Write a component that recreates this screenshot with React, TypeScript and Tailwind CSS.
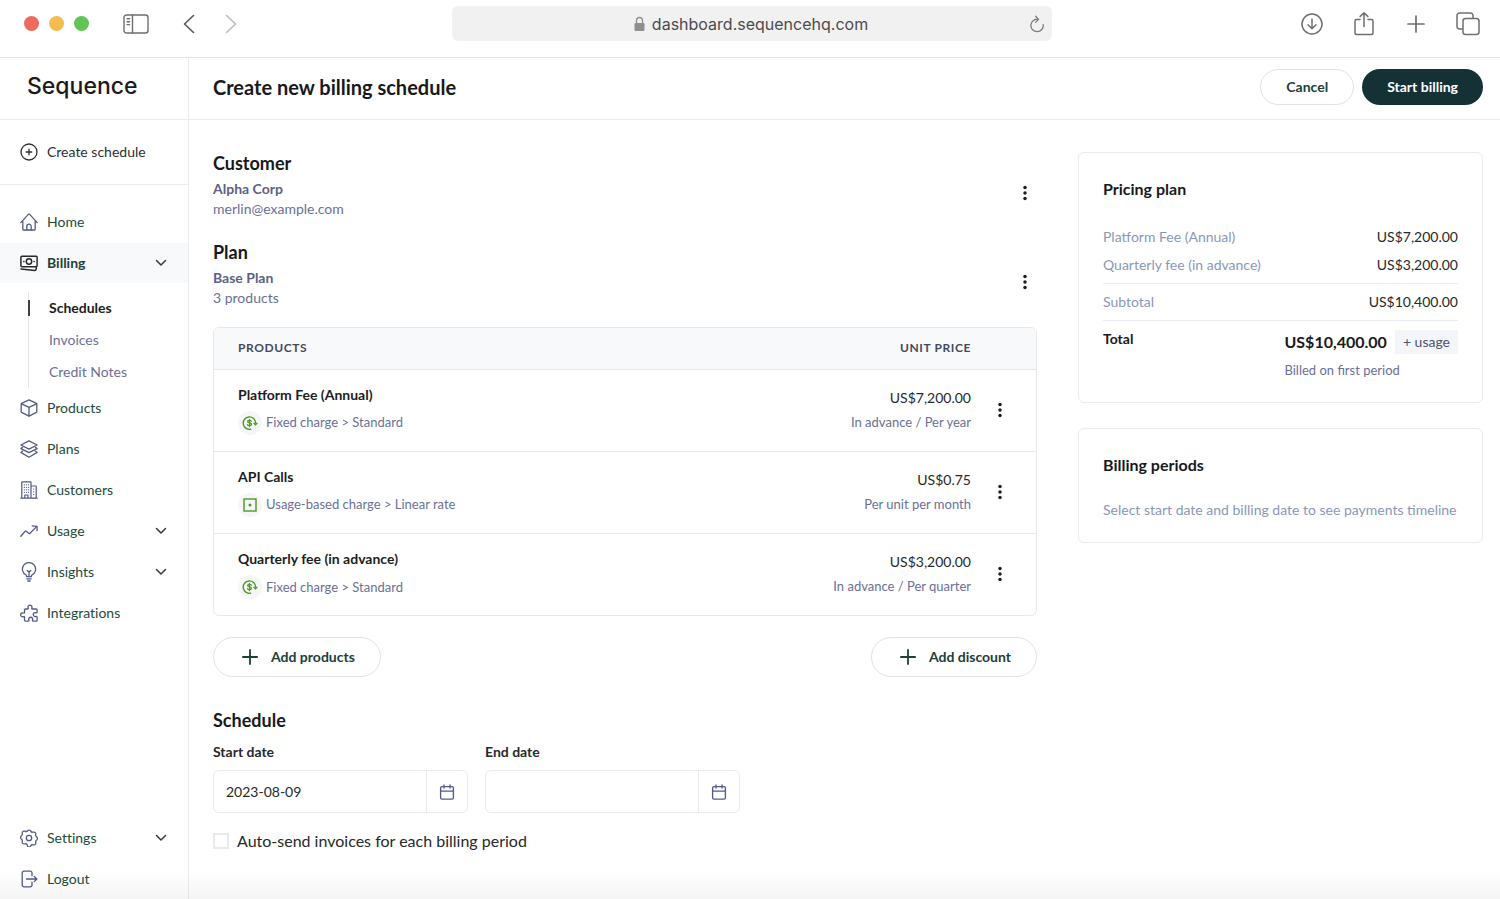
import type { ReactNode } from "react";
import { useState } from "react";

type IconProps = { className?: string };

function Svg({ className = "size-[18px]", width = 1.3, children }: IconProps & { width?: number; children: ReactNode }) {
  return (
    <svg
      className={className}
      viewBox="0 0 18 18"
      fill="none"
      stroke="currentColor"
      strokeWidth={width}
      strokeLinecap="round"
      strokeLinejoin="round"
      aria-hidden="true"
    >
      {children}
    </svg>
  );
}

const HomeIcon = () => (
  <Svg>
    <path d="M.8 9.6 8.3 1.4a1 1 0 0 1 1.4 0l7.5 8.2M2.8 8.2v8a.8.8 0 0 0 .8.8h10.8a.8.8 0 0 0 .8-.8v-8" />
    <path d="M6.8 17v-3.6a2.2 2.2 0 0 1 4.4 0V17" />
  </Svg>
);

const BillingIcon = () => (
  <Svg width={1.5}>
    <rect x=".9" y="2.2" width="16.2" height="10.6" rx="1" />
    <circle cx="9" cy="7.5" r="2.7" />
    <path d="M3.8 7.5h.2M14 7.5h.2M1 15l13.6 1.4a1.4 1.4 0 0 0 1.5-1.2l.2-1.6" />
  </Svg>
);

const BoxIcon = () => (
  <Svg>
    <path d="M9 .9 16.4 4.4a.8.8 0 0 1 .4.7v7.6a.8.8 0 0 1-.4.7L9 17.1l-7.4-3.7a.8.8 0 0 1-.4-.7V5.1a.8.8 0 0 1 .4-.7L9 .9Z" />
    <path d="M1.6 4.8 9 8.4l7.4-3.6M9 8.4v8.5" />
  </Svg>
);

const LayersIcon = () => (
  <Svg>
    <path d="M9 .8 17.1 5 9 9.2.9 5 9 .8Z" />
    <path d="M2.6 7.4.9 8.6 9 12.7l8.1-4.1-1.7-1.2M2.6 11.1.9 12.4 9 17.2l8.1-4.8-1.7-1.3" />
  </Svg>
);

const BuildingIcon = () => (
  <Svg width={1.2}>
    <path d="M.8 17.2h16.4M1.8 17V1.4a.6.6 0 0 1 .6-.6h8a.6.6 0 0 1 .6.6V17M11 5h4.6a.6.6 0 0 1 .6.6V17M4.8 17v-3H8v3" />
    <path d="M4.3 3.8h.1M6.4 3.8h.1M8.5 3.8h.1M4.3 6.3h.1M6.4 6.3h.1M8.5 6.3h.1M4.3 8.8h.1M6.4 8.8h.1M8.5 8.8h.1M4.3 11.3h.1M6.4 11.3h.1M8.5 11.3h.1M13.6 8h.1M13.6 10.8h.1M13.6 13.6h.1" />
  </Svg>
);

const TrendIcon = () => (
  <Svg>
    <path d="m.8 14.2 4.4-5a.8.8 0 0 1 1.2 0l2.4 2.2a.8.8 0 0 0 1.2-.1l6.8-6.9" />
    <path d="m12.2 3.9 4.8.4.1 4.2" />
  </Svg>
);

const BulbIcon = () => (
  <svg className="h-5 w-[18px]" viewBox="0 0 18 20" fill="none" stroke="currentColor" strokeWidth="1.3" strokeLinecap="round" strokeLinejoin="round" aria-hidden="true">
    <path d="M6.5 14.6v-1.3a6.6 6.6 0 1 1 5 0v1.3ZM6.8 16.8h4.4M7.8 19h2.4M9 14.4V9.8M7.2 8.6 9 9.9l1.8-1.3" />
  </svg>
);

const PuzzleIcon = () => (
  <Svg>
    <path d="M5.4 5h2.2c.5 0 .8-.5.6-1a2 2 0 1 1 3.6 0c-.2.5.1 1 .6 1h3.8a.9.9 0 0 1 .9.9v2.3c0 .5-.5.8-1 .6a2 2 0 1 0 0 3.6c.5-.2 1 .1 1 .6v3.2a.9.9 0 0 1-.9.9h-3.1c-.5 0-.8-.5-.6-1a2 2 0 1 0-3.6 0c.2.5-.1 1-.6 1H5.4a.9.9 0 0 1-.9-.9v-3c0-.5-.5-.8-1-.6a2 2 0 1 1 0-3.6c.5.2 1-.1 1-.6V5.9a.9.9 0 0 1 .9-.9Z" />
  </Svg>
);

const GearIcon = () => (
  <Svg>
    <circle cx="9" cy="9" r="2.7" />
    <path d="m7.4 2 .2-.3a1.8 1.8 0 0 1 2.8 0l.6.8a1.8 1.8 0 0 0 1.8.7l1-.1a1.8 1.8 0 0 1 2 2l-.1 1a1.8 1.8 0 0 0 .7 1.6l.4.4a1.8 1.8 0 0 1 0 2.8l-.4.3a1.8 1.8 0 0 0-.7 1.7l.1 1a1.8 1.8 0 0 1-2 2l-1-.1a1.8 1.8 0 0 0-1.8.7l-.6.8a1.8 1.8 0 0 1-2.8 0L7 15.5a1.8 1.8 0 0 0-1.8-.7l-1 .1a1.8 1.8 0 0 1-2-2l.1-1a1.8 1.8 0 0 0-.7-1.7l-.4-.3a1.8 1.8 0 0 1 0-2.8l.4-.4a1.8 1.8 0 0 0 .7-1.6l-.1-1a1.8 1.8 0 0 1 2-2l1 .1A1.8 1.8 0 0 0 7 2.5Z" />
  </Svg>
);

const LogoutIcon = () => (
  <Svg>
    <path d="M12 5.8V3a1.8 1.8 0 0 0-1.8-1.8H4A1.8 1.8 0 0 0 2.2 3v12A1.8 1.8 0 0 0 4 16.8h6.2A1.8 1.8 0 0 0 12 15v-2.8M6.5 9h10.3M14.2 6.4 16.9 9l-2.7 2.6" />
  </Svg>
);

const PlusCircleIcon = () => (
  <Svg>
    <circle cx="9" cy="9" r="8" />
    <path d="M9 6.2v5.6M6.2 9h5.6" />
  </Svg>
);

const CalendarIcon = () => (
  <Svg className="size-4" width={1.5}>
    <rect x="1.8" y="3" width="14.4" height="14" rx="1.6" />
    <path d="M1.8 8h14.4M5.6 1v3.6M12.4 1v3.6" />
  </Svg>
);

const Chevron = () => (
  <svg className="h-2 w-3 text-[#33373f]" viewBox="0 0 12 8" fill="none" stroke="currentColor" strokeWidth="1.5" strokeLinecap="round" strokeLinejoin="round" aria-hidden="true">
    <path d="M1.5 1.5 6 6l4.5-4.5" />
  </svg>
);

const PlusIcon = () => (
  <svg className="size-4" viewBox="0 0 16 16" stroke="currentColor" strokeWidth="1.8" strokeLinecap="round" aria-hidden="true">
    <path d="M8 .9v14.2M.9 8h14.2" />
  </svg>
);

function FixedChargeIcon() {
  return (
    <svg className="h-[14px] w-4" viewBox="0 0 16 14" fill="none" stroke="#4f9a1c" strokeWidth="1.4" strokeLinecap="round" strokeLinejoin="round" aria-hidden="true">
      <path d="M8.6 13.2A6.2 6.2 0 1 1 13.6 7" />
      <path d="M11.8 7.2h3.6l-1.8 2Z" fill="#4f9a1c" strokeWidth=".8" />
      <path d="M9.4 5.2C9 4.5 8.3 4.3 7.5 4.3c-1 0-1.9.4-1.9 1.3 0 1.9 3.9.8 3.9 2.7 0 .9-.9 1.4-2 1.4-.9 0-1.7-.3-2-1M7.5 3.3v7.4" strokeWidth="1.3" />
    </svg>
  );
}

function UsageChargeIcon() {
  return (
    <svg className="size-[14px]" viewBox="0 0 14 14" fill="none" aria-hidden="true">
      <rect x="1" y="1" width="12" height="12" stroke="#4f9a1c" strokeWidth="1.4" />
      <circle cx="7" cy="7" r="1.5" fill="#4f9a1c" />
    </svg>
  );
}

function MoreButton({ label }: { label: string }) {
  return (
    <button type="button" aria-label={label} className="flex h-6 w-6 items-center justify-center text-[#1b1d1f]">
      <svg className="h-4 w-1" viewBox="0 0 4 16" fill="currentColor" aria-hidden="true">
        <circle cx="2" cy="2.6" r="1.75" />
        <circle cx="2" cy="8" r="1.75" />
        <circle cx="2" cy="13.4" r="1.75" />
      </svg>
    </button>
  );
}

function BrowserBar() {
  return (
    <header className="flex items-start gap-4 border-b border-[#e3e3e4] pt-[6px] pb-4 text-[#6f6f70]">
      <div className="flex h-[35px] flex-1 items-center pl-6">
        <div className="flex gap-[10px]">
          <span className="size-[15px] rounded-full bg-[#ee6a5f]" />
          <span className="size-[15px] rounded-full bg-[#f5bd4f]" />
          <span className="size-[15px] rounded-full bg-[#61c454]" />
        </div>
        <button type="button" aria-label="Toggle sidebar" className="ml-[34px]">
          <svg className="h-5 w-[26px]" viewBox="0 0 26 20" fill="none" stroke="currentColor" strokeWidth="1.4" strokeLinecap="round">
            <rect x="1" y="1" width="24" height="18" rx="2.5" />
            <path d="M9.5 1v18M4 4.8h2.6M4 7.7h2.6M4 10.6h2.6" />
          </svg>
        </button>
        <button type="button" aria-label="Back" className="ml-[34px]">
          <svg className="h-5 w-3" viewBox="0 0 12 20" fill="none" stroke="#555557" strokeWidth="1.6" strokeLinecap="round" strokeLinejoin="round">
            <path d="M10.5 1.5 1.5 10l9 8.5" />
          </svg>
        </button>
        <button type="button" aria-label="Forward" className="ml-[30px]">
          <svg className="h-5 w-3" viewBox="0 0 12 20" fill="none" stroke="#bcbcbd" strokeWidth="1.6" strokeLinecap="round" strokeLinejoin="round">
            <path d="m1.5 1.5 9 8.5-9 8.5" />
          </svg>
        </button>
      </div>
      <div className="flex h-[35px] w-2/5 items-center rounded-md bg-[#f1f1f1] pr-2 pl-5">
        <div className="flex flex-1 items-center justify-center gap-[7px]">
          <svg className="h-4 w-[11px]" viewBox="0 0 11 16" fill="none" aria-hidden="true">
            <path d="M2.5 8V4.5a3 3 0 0 1 6 0V8" stroke="#8f8f90" strokeWidth="1.3" />
            <rect x=".5" y="7" width="10" height="8" rx="1.3" fill="#8f8f90" />
          </svg>
          <span className="font-[Inter,sans-serif] text-base leading-5 text-[#4b4b4c]">dashboard.sequencehq.com</span>
        </div>
        <button type="button" aria-label="Reload">
          <svg className="h-[18px] w-[14px]" viewBox="0 0 14 18" fill="none" stroke="#7d7d7e" strokeWidth="1.3" strokeLinecap="round" strokeLinejoin="round">
            <path d="M8.3 4.4a6.2 6.2 0 1 0 4.9 5.2M5.6 1.2l3 3.2-3 3" />
          </svg>
        </button>
      </div>
      <div className="flex h-[35px] flex-1 items-center justify-end gap-7 pr-5">
        <button type="button" aria-label="Downloads">
          <svg className="size-6" viewBox="0 0 24 24" fill="none" stroke="currentColor" strokeWidth="1.5" strokeLinecap="round" strokeLinejoin="round">
            <circle cx="12" cy="12" r="10" />
            <path d="M12 7v9.5M8 12.8l4 4 4-4" />
          </svg>
        </button>
        <button type="button" aria-label="Share">
          <svg className="size-6" viewBox="0 0 24 24" fill="none" stroke="currentColor" strokeWidth="1.5" strokeLinecap="round" strokeLinejoin="round">
            <path d="M8 7.5H4.5A1.5 1.5 0 0 0 3 9v12a1.5 1.5 0 0 0 1.5 1.5h15A1.5 1.5 0 0 0 21 21V9a1.5 1.5 0 0 0-1.5-1.5H16M12 14.5V.9M8.2 4.4 12 .8l3.8 3.6" />
          </svg>
        </button>
        <button type="button" aria-label="New tab">
          <svg className="size-6" viewBox="0 0 24 24" fill="none" stroke="currentColor" strokeWidth="1.7" strokeLinecap="round">
            <path d="M12 4v16M4 12h16" />
          </svg>
        </button>
        <button type="button" aria-label="Show tabs">
          <svg className="size-6" viewBox="0 0 24 24" fill="none" stroke="currentColor" strokeWidth="1.5" strokeLinejoin="round">
            <rect x="7" y="6.5" width="16" height="16" rx="2.5" />
            <path d="M7 17H3.5A2.5 2.5 0 0 1 1 14.5v-11A2.5 2.5 0 0 1 3.5 1h11A2.5 2.5 0 0 1 17 3.5v3" />
          </svg>
        </button>
      </div>
    </header>
  );
}

function NavItem({ icon, label, expandable, active }: { icon: ReactNode; label: string; expandable?: boolean; active?: boolean }) {
  return (
    <a
      href="#"
      className={
        active
          ? "flex h-10 items-center gap-[9px] bg-[#f8f9fb] pr-[21px] pl-5 text-sm font-bold text-[#1d4038]"
          : "flex h-10 items-center gap-[9px] pr-[21px] pl-5 text-sm text-[#1d4a3c]"
      }
    >
      <span className={active ? "text-[#26282c]" : "text-[#545a86]"}>{icon}</span>
      <span className="flex-1">{label}</span>
      {expandable && <Chevron />}
    </a>
  );
}

function Sidebar() {
  return (
    <aside className="flex w-[189px] shrink-0 flex-col border-r border-[#e9ebf0]">
      <div className="flex h-[62px] items-center border-b border-[#e9ebf0] px-[27px] pb-1">
        <span className="font-[Inter,sans-serif] text-[23px] font-medium text-[#1a1a1a]">Sequence</span>
      </div>
      <div className="border-b border-[#e9ebf0]">
        <a href="#" className="flex h-16 items-center gap-[9px] px-5 text-sm text-[#2c2f33]">
          <PlusCircleIcon />
          Create schedule
        </a>
      </div>
      <nav className="mt-[17px] flex flex-1 flex-col gap-px [font-variant-ligatures:none]">
        <NavItem icon={<HomeIcon />} label="Home" />
        <NavItem icon={<BillingIcon />} label="Billing" expandable active />
        <div className="mt-2 -mb-px ml-7 flex flex-col border-l border-[#e4e6ee] text-sm text-[#6b7097]">
          <a href="#" className="flex h-8 items-center font-bold text-[#1b1d1f]">
            <span className="-ml-px h-4 w-0.5 bg-[#3c3e42]" />
            <span className="pl-[19px]">Schedules</span>
          </a>
          <a href="#" className="flex h-8 items-center pl-5">Invoices</a>
          <a href="#" className="flex h-8 items-center pl-5">Credit Notes</a>
        </div>
        <NavItem icon={<BoxIcon />} label="Products" />
        <NavItem icon={<LayersIcon />} label="Plans" />
        <NavItem icon={<BuildingIcon />} label="Customers" />
        <NavItem icon={<TrendIcon />} label="Usage" expandable />
        <NavItem icon={<BulbIcon />} label="Insights" expandable />
        <NavItem icon={<PuzzleIcon />} label="Integrations" />
        <div className="mt-auto flex flex-col gap-px">
          <NavItem icon={<GearIcon />} label="Settings" expandable />
          <NavItem icon={<LogoutIcon />} label="Logout" />
        </div>
      </nav>
    </aside>
  );
}

function Section({ title, name, detail }: { title: string; name: string; detail: string }) {
  return (
    <section className="flex items-start justify-between">
      <div>
        <h2 className="mb-1 text-lg leading-6 font-bold text-[#17191c]">{title}</h2>
        <p className="text-sm leading-5 font-bold text-[#5b6189]">{name}</p>
        <p className="text-sm leading-5 text-[#6b7097]">{detail}</p>
      </div>
      <div className="pt-[30px]">
        <MoreButton label={`${title} options`} />
      </div>
    </section>
  );
}

const products = [
  { name: "Platform Fee (Annual)", type: "Fixed charge > Standard", icon: <FixedChargeIcon />, price: "US$7,200.00", terms: "In advance / Per year" },
  { name: "API Calls", type: "Usage-based charge > Linear rate", icon: <UsageChargeIcon />, price: "US$0.75", terms: "Per unit per month" },
  { name: "Quarterly fee (in advance)", type: "Fixed charge > Standard", icon: <FixedChargeIcon />, price: "US$3,200.00", terms: "In advance / Per quarter" },
];

function ProductsTable() {
  return (
    <div className="overflow-hidden rounded-md border border-[#e6e8f0]">
      <table className="w-full">
        <thead>
          <tr className="h-[41px] border-b border-[#e6e8f0] bg-[#f8f9fb] text-xs tracking-wider text-[#444960]">
            <th className="pl-6 text-left font-bold">PRODUCTS</th>
            <th className="text-right font-bold">UNIT PRICE</th>
            <th className="w-[65px]" />
          </tr>
        </thead>
        <tbody>
          {products.map((product) => (
            <tr key={product.name} className="h-[82px] border-b border-[#e6e8f0] last:border-b-0">
              <td className="pl-6">
                <p className="text-sm leading-5 font-bold text-[#1b1d1f]">{product.name}</p>
                <div className="mt-[6px] flex items-center gap-1">
                  <span className="flex size-6 items-center justify-center rounded-full bg-[#f5f6f9]">{product.icon}</span>
                  <span className="text-[13px] text-[#6b7097]">{product.type}</span>
                </div>
              </td>
              <td className="text-right">
                <p className="text-sm leading-6 text-[#26282c]">{product.price}</p>
                <p className="text-[13px] leading-6 text-[#6b7097]">{product.terms}</p>
              </td>
              <td className="pl-[17px]">
                <MoreButton label={`${product.name} options`} />
              </td>
            </tr>
          ))}
        </tbody>
      </table>
    </div>
  );
}

function DateField({ id, label, value, onChange }: { id: string; label: string; value: string; onChange: (value: string) => void }) {
  return (
    <div>
      <label htmlFor={id} className="block text-sm leading-5 font-bold text-[#26282c]">{label}</label>
      <div className="mt-2 flex h-[43px] w-[255px] rounded-md border border-[#e9ebf2]">
        <input
          id={id}
          type="text"
          value={value}
          onChange={(event) => onChange(event.target.value)}
          className="min-w-0 flex-1 px-3 text-sm text-[#26282c] outline-none"
        />
        <button type="button" aria-label={`Pick ${label.toLowerCase()}`} className="flex w-[41px] items-center justify-center border-l border-[#e9ebf2] text-[#545a86]">
          <CalendarIcon />
        </button>
      </div>
    </div>
  );
}

function PricingPlan() {
  return (
    <section className="rounded-md border border-[#e9ebf2] px-6 pt-6 pb-[22px]">
      <h2 className="text-base leading-6 font-bold text-[#17191c]">Pricing plan</h2>
      <dl className="mt-[22px] text-sm">
        <div className="flex h-7 items-center justify-between">
          <dt className="text-[#8a97b8]">Platform Fee (Annual)</dt>
          <dd className="text-[#26282c]">US$7,200.00</dd>
        </div>
        <div className="flex h-7 items-center justify-between">
          <dt className="text-[#8a97b8]">Quarterly fee (in advance)</dt>
          <dd className="text-[#26282c]">US$3,200.00</dd>
        </div>
        <div className="mt-1 flex h-[38px] items-center justify-between border-y border-[#e9ebf2]">
          <dt className="text-[#8a97b8]">Subtotal</dt>
          <dd className="text-[#26282c]">US$10,400.00</dd>
        </div>
        <div className="mt-2 flex items-start justify-between">
          <dt className="leading-5 font-bold text-[#17191c]">Total</dt>
          <dd className="pt-px">
            <div className="flex h-6 items-center gap-2">
              <span className="text-base font-bold text-[#17191c]">US$10,400.00</span>
              <span className="bg-[#f4f5f9] px-2 text-sm leading-6 text-[#4d5270]">+ usage</span>
            </div>
            <p className="mt-[6px] text-[13px] leading-5 text-[#6b7097]">Billed on first period</p>
          </dd>
        </div>
      </dl>
    </section>
  );
}

export default function App() {
  const [startDate, setStartDate] = useState("2023-08-09");
  const [endDate, setEndDate] = useState("");
  const [autoSend, setAutoSend] = useState(false);

  return (
    <div className="flex min-h-screen flex-col bg-white font-[Lato,sans-serif]">
      <BrowserBar />
      <div className="flex flex-1">
        <Sidebar />
        <div className="min-w-0 flex-1">
          <header className="flex h-[62px] items-center gap-2 border-b border-[#e9ebf0] pr-[17px] pb-1 pl-6">
            <h1 className="flex-1 text-xl font-bold text-[#17191c]">Create new billing schedule</h1>
            <button type="button" className="h-9 rounded-full border border-[#dfe2ea] px-[25px] text-sm font-bold text-[#1d4038]">Cancel</button>
            <button type="button" className="h-9 rounded-full bg-[#143236] px-[25px] text-sm font-bold text-white">Start billing</button>
          </header>
          <div className="flex items-start gap-[41px] pr-[17px] pl-6">
            <main className="min-w-0 flex-1 pt-[31px]">
              <div className="flex flex-col gap-[21px]">
                <Section title="Customer" name="Alpha Corp" detail="merlin@example.com" />
                <Section title="Plan" name="Base Plan" detail="3 products" />
              </div>
              <div className="mt-[19px]">
                <ProductsTable />
              </div>
              <div className="mt-[21px] flex justify-between">
                <button type="button" className="flex h-10 items-center gap-[13px] rounded-full border border-[#dfe2ea] pr-[25px] pl-7 text-sm font-bold text-[#1d4038]">
                  <PlusIcon /> Add products
                </button>
                <button type="button" className="flex h-10 items-center gap-[13px] rounded-full border border-[#dfe2ea] pr-[25px] pl-7 text-sm font-bold text-[#1d4038]">
                  <PlusIcon /> Add discount
                </button>
              </div>
              <section className="mt-[31px]">
                <h2 className="text-lg leading-6 font-bold text-[#17191c]">Schedule</h2>
                <div className="mt-[10px] flex gap-[17px]">
                  <DateField id="start-date" label="Start date" value={startDate} onChange={setStartDate} />
                  <DateField id="end-date" label="End date" value={endDate} onChange={setEndDate} />
                </div>
                <label className="mt-4 flex items-center gap-2 text-base text-[#26282c]">
                  <input
                    type="checkbox"
                    checked={autoSend}
                    onChange={(event) => setAutoSend(event.target.checked)}
                    className="size-4 appearance-none border-2 border-[#e6e9f1] bg-white checked:bg-[#143236]"
                  />
                  Auto-send invoices for each billing period
                </label>
              </section>
            </main>
            <aside className="mt-8 flex w-[405px] shrink-0 flex-col gap-[25px]">
              <PricingPlan />
              <section className="rounded-md border border-[#e9ebf2] px-6 pt-6 pb-[22px]">
                <h2 className="text-base leading-6 font-bold text-[#17191c]">Billing periods</h2>
                <p className="mt-[23px] text-sm leading-5 text-[#8a97b8]">Select start date and billing date to see payments timeline</p>
              </section>
            </aside>
          </div>
        </div>
      </div>
      <div className="pointer-events-none fixed inset-x-0 bottom-0 h-7 bg-linear-to-b from-transparent to-black/4" />
    </div>
  );
}
